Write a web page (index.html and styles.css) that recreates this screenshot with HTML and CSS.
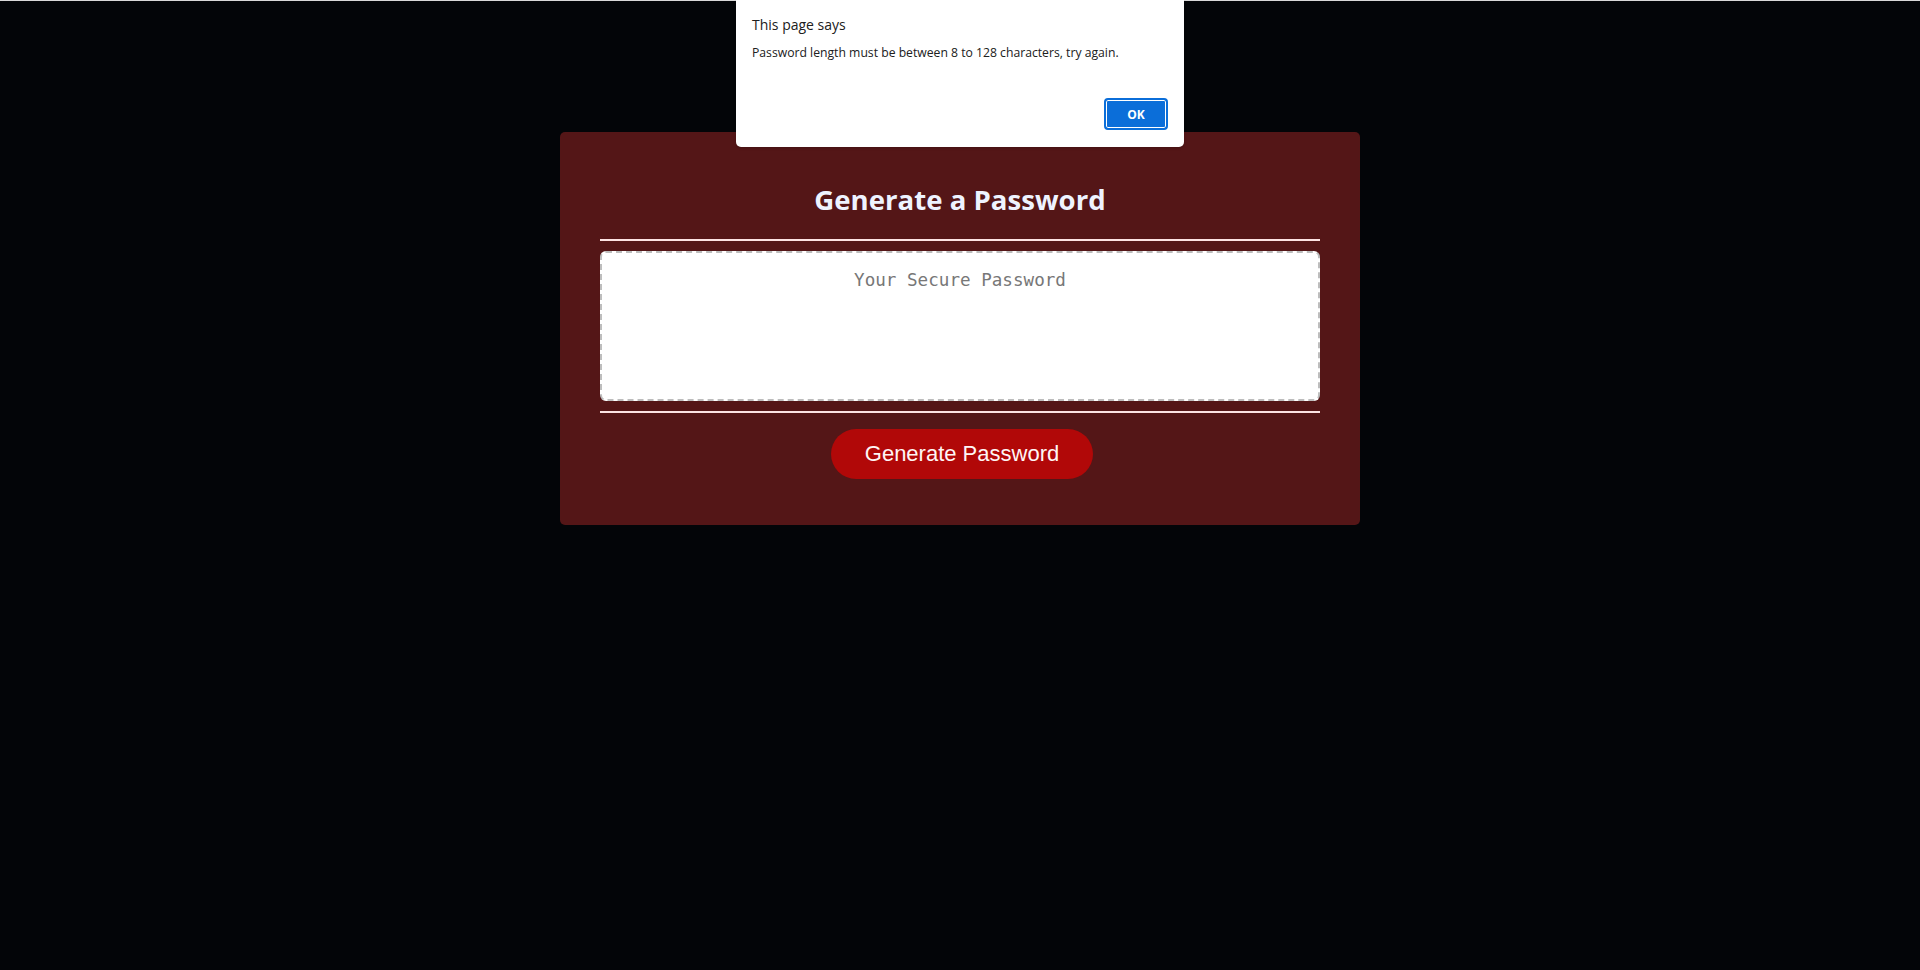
FILE: index.html
```html
<!DOCTYPE html>
<html lang="en">
<head>
<meta charset="UTF-8">
<title>Password Generator</title>
<link rel="stylesheet" href="styles.css">
</head>
<body>
<div class="topline"></div>
<main class="page">
  <section class="card">
    <h1 class="card-title">Generate a Password</h1>
    <div class="rule"></div>
    <textarea class="password" placeholder="Your Secure Password" readonly></textarea>
    <div class="rule"></div>
    <div class="actions">
      <button class="generate" type="button">Generate Password</button>
    </div>
  </section>
</main>
<div class="alert" role="alertdialog">
  <div class="alert-title">This page says</div>
  <div class="alert-message">Password length must be between 8 to 128 characters, try again.</div>
  <div class="alert-actions">
    <button class="alert-ok" type="button">OK</button>
  </div>
</div>
</body>
</html>
```
FILE: styles.css
```css
html, body {
  margin: 0;
  padding: 0;
  height: 100%;
}

body {
  background: #030508;
  font-family: "Open Sans", "Noto Sans", sans-serif;
  position: relative;
  overflow: hidden;
}

.topline {
  height: 1px;
  background: #d9d9d9;
}

.page {
  display: flex;
  justify-content: center;
  padding-top: 131px;
}

.card {
  width: 800px;
  box-sizing: border-box;
  background: #541617;
  border-radius: 5px;
  padding: 49px 40px 46px;
  display: flex;
  flex-direction: column;
}

.card-title {
  margin: 0 0 22px;
  font-family: "Open Sans", sans-serif;
  font-weight: 700;
  font-size: 27.6px;
  line-height: 36px;
  text-align: center;
  color: #eef3ff;
}

.rule {
  height: 2px;
  background: #fde3e3;
}

.password {
  display: block;
  box-sizing: border-box;
  width: 100%;
  height: 150px;
  margin: 10px 0;
  padding: 17px 12px 12px;
  border: 2px dashed #bdbdbd;
  border-radius: 6px;
  background: #fff;
  resize: none;
  outline: none;
  font-family: "DejaVu Sans Mono", "Liberation Mono", monospace;
  font-size: 17.6px;
  line-height: 20px;
  text-align: center;
  color: #333;
}

.password::placeholder {
  color: #777777;
  opacity: 1;
}

.actions {
  display: flex;
  justify-content: center;
  padding-top: 16px;
  padding-left: 4px;
}

.generate {
  width: 262px;
  height: 50px;
  border: none;
  border-radius: 25px;
  background: #b10808;
  color: #fff5f5;
  font-family: "Liberation Sans", Arial, sans-serif;
  font-size: 22px;
  line-height: 26px;
  padding: 0;
  cursor: pointer;
}

.alert {
  position: absolute;
  top: 0;
  left: 50%;
  margin-left: -224px;
  width: 448px;
  height: 147px;
  box-sizing: border-box;
  background: #ffffff;
  border-radius: 0 0 5px 5px;
  padding: 15px 16px 17px;
  display: flex;
  flex-direction: column;
  box-shadow: 0 1px 3px rgba(0, 0, 0, 0.2);
}

.alert-title {
  font-family: "Segoe UI", "Open Sans", sans-serif;
  font-size: 14px;
  line-height: 20px;
  color: #202020;
}

.alert-message {
  margin-top: 10px;
  font-family: "Segoe UI", "Open Sans", sans-serif;
  font-size: 12.2px;
  line-height: 16px;
  color: #202020;
}

.alert-actions {
  margin-top: auto;
  display: flex;
  justify-content: flex-end;
}

.alert-ok {
  width: 64px;
  height: 32px;
  box-sizing: border-box;
  border: 2px solid #0b6ed9;
  border-radius: 4px;
  box-shadow: inset 0 0 0 1px #ffffff;
  background: #0b6ed9;
  color: #ffffff;
  font-family: "Segoe UI", "Open Sans", sans-serif;
  font-weight: 700;
  font-size: 12px;
  padding: 0;
}
```
